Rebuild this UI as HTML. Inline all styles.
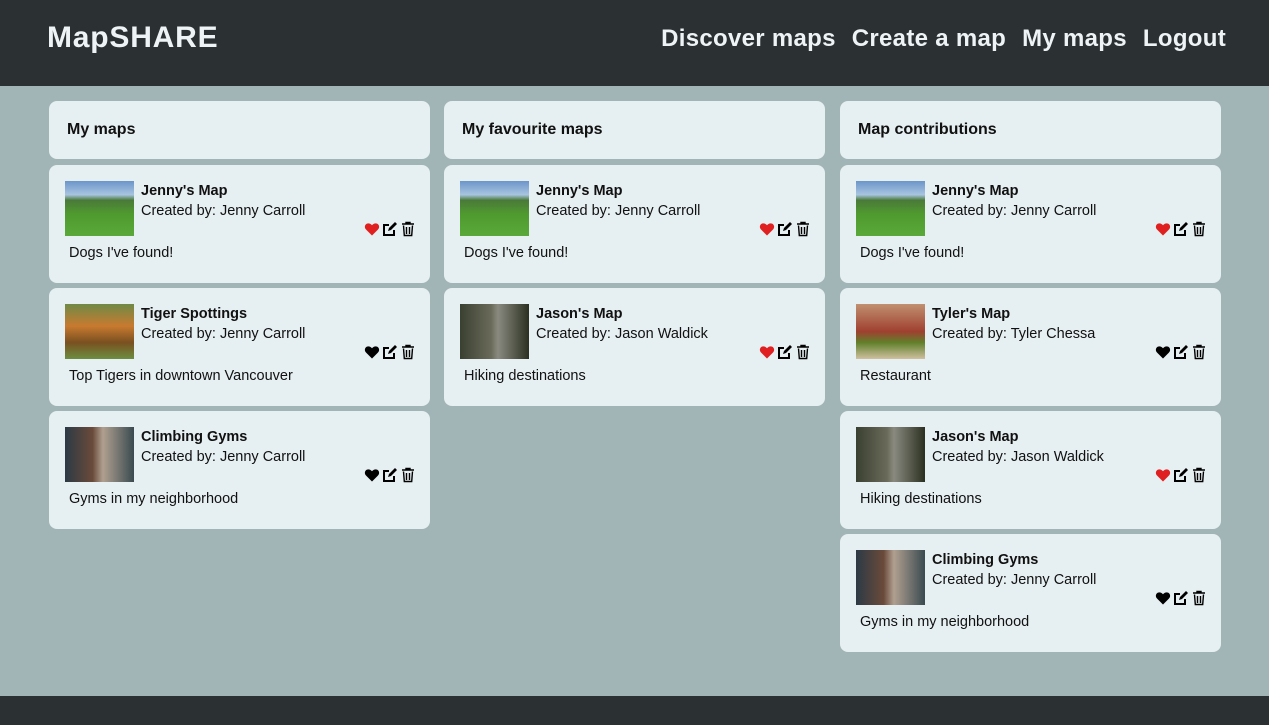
<!DOCTYPE html><html><head><style>
*{box-sizing:border-box;margin:0;padding:0}
body{width:1269px;height:725px;background:#a1b5b6;font-family:"Liberation Sans",sans-serif;position:relative;overflow:hidden;color:#111}
.hdr{position:absolute;left:0;top:0;width:1269px;height:86px;background:#2b3032}
.logo{position:absolute;left:47px;top:21px;font-size:30px;font-weight:bold;color:#eef3f5;letter-spacing:0.8px}
.nav{position:absolute;right:43px;top:25px;font-size:24px;font-weight:bold;color:#eef3f5;letter-spacing:0.3px}
.nav span{margin-left:16px}
.ftr{position:absolute;left:0;top:696px;width:1269px;height:29px;background:#2b3032}
.col{position:absolute;top:101px;width:381px}
.head{height:58px;background:#e6eff1;border-radius:8px;padding:20px 18px;font-size:16px;font-weight:bold;margin-bottom:6px}
.card{height:118px;background:#e6eff1;border-radius:8px;position:relative;margin-bottom:5px}
.img{position:absolute;left:16px;top:16px;width:69px;height:55px}
.t{position:absolute;left:92px;top:18px;font-size:14.5px;font-weight:bold}
.c{position:absolute;left:92px;top:38px;font-size:14.5px}
.d{position:absolute;left:20px;top:80px;font-size:14.5px}
.ic{position:absolute;left:315px;top:56px;display:flex;gap:2px}
.dog{background:linear-gradient(#6b95c9 0,#a8c4e0 25%,#4a7a3a 35%,#4f9a2e 60%,#5aa83a 100%)}
.tig{background:linear-gradient(#6f8a45,#c87a30 40%,#7a5020 70%,#6c8e40)}
.gym{background:linear-gradient(90deg,#2c3a45,#6a4a3a 40%,#b0a090 55%,#3a4a50)}
.hike{background:linear-gradient(90deg,#3a4030,#6a6a5a 45%,#8a8a80 55%,#2a3020)}
.food{background:linear-gradient(#c09070,#a04030 50%,#60802a 70%,#d0c0a0)}
</style></head><body>
<div class="hdr"><div class="logo">MapSHARE</div><div class="nav"><span>Discover maps</span><span>Create a map</span><span>My maps</span><span>Logout</span></div></div>
<svg width="0" height="0" style="position:absolute"><defs>
<symbol id="h" viewBox="0 0 16 16"><path d="M8 14.5 2 8.5C.2 6.7.6 3.6 2.9 2.6 4.6 1.9 6.7 2.5 8 4.3 9.3 2.5 11.4 1.9 13.1 2.6 15.4 3.6 15.8 6.7 14 8.5Z"/></symbol>
<symbol id="e" viewBox="0 0 16 16"><path d="M12 9v5H2V4h5" fill="none" stroke="#000" stroke-width="2"/><path d="M6 10l1-3 6-6 2 2-6 6z" fill="#000"/></symbol>
<symbol id="t" viewBox="0 0 16 16"><path d="M2 3h12M6 3V1.5h4V3M3.5 4.5l.8 10h7.4l.8-10M6.5 6v7M9.5 6v7" fill="none" stroke="#000" stroke-width="1.4"/></symbol>
</defs></svg>
<div class="col" style="left:49px">
<div class="head">My maps</div>
<div class="card"><div class="img dog"></div><div class="t">Jenny's Map</div><div class="c">Created by: Jenny Carroll</div><div class="ic"><svg width="16" height="16" fill="#e02020"><use href="#h"/></svg><svg width="16" height="16"><use href="#e"/></svg><svg width="16" height="16"><use href="#t"/></svg></div><div class="d">Dogs I've found!</div></div>
<div class="card"><div class="img tig"></div><div class="t">Tiger Spottings</div><div class="c">Created by: Jenny Carroll</div><div class="ic"><svg width="16" height="16" fill="#000"><use href="#h"/></svg><svg width="16" height="16"><use href="#e"/></svg><svg width="16" height="16"><use href="#t"/></svg></div><div class="d">Top Tigers in downtown Vancouver</div></div>
<div class="card"><div class="img gym"></div><div class="t">Climbing Gyms</div><div class="c">Created by: Jenny Carroll</div><div class="ic"><svg width="16" height="16" fill="#000"><use href="#h"/></svg><svg width="16" height="16"><use href="#e"/></svg><svg width="16" height="16"><use href="#t"/></svg></div><div class="d">Gyms in my neighborhood</div></div>
</div>
<div class="col" style="left:444px">
<div class="head">My favourite maps</div>
<div class="card"><div class="img dog"></div><div class="t">Jenny's Map</div><div class="c">Created by: Jenny Carroll</div><div class="ic"><svg width="16" height="16" fill="#e02020"><use href="#h"/></svg><svg width="16" height="16"><use href="#e"/></svg><svg width="16" height="16"><use href="#t"/></svg></div><div class="d">Dogs I've found!</div></div>
<div class="card"><div class="img hike"></div><div class="t">Jason's Map</div><div class="c">Created by: Jason Waldick</div><div class="ic"><svg width="16" height="16" fill="#e02020"><use href="#h"/></svg><svg width="16" height="16"><use href="#e"/></svg><svg width="16" height="16"><use href="#t"/></svg></div><div class="d">Hiking destinations</div></div>
</div>
<div class="col" style="left:840px">
<div class="head">Map contributions</div>
<div class="card"><div class="img dog"></div><div class="t">Jenny's Map</div><div class="c">Created by: Jenny Carroll</div><div class="ic"><svg width="16" height="16" fill="#e02020"><use href="#h"/></svg><svg width="16" height="16"><use href="#e"/></svg><svg width="16" height="16"><use href="#t"/></svg></div><div class="d">Dogs I've found!</div></div>
<div class="card"><div class="img food"></div><div class="t">Tyler's Map</div><div class="c">Created by: Tyler Chessa</div><div class="ic"><svg width="16" height="16" fill="#000"><use href="#h"/></svg><svg width="16" height="16"><use href="#e"/></svg><svg width="16" height="16"><use href="#t"/></svg></div><div class="d">Restaurant</div></div>
<div class="card"><div class="img hike"></div><div class="t">Jason's Map</div><div class="c">Created by: Jason Waldick</div><div class="ic"><svg width="16" height="16" fill="#e02020"><use href="#h"/></svg><svg width="16" height="16"><use href="#e"/></svg><svg width="16" height="16"><use href="#t"/></svg></div><div class="d">Hiking destinations</div></div>
<div class="card"><div class="img gym"></div><div class="t">Climbing Gyms</div><div class="c">Created by: Jenny Carroll</div><div class="ic"><svg width="16" height="16" fill="#000"><use href="#h"/></svg><svg width="16" height="16"><use href="#e"/></svg><svg width="16" height="16"><use href="#t"/></svg></div><div class="d">Gyms in my neighborhood</div></div>
</div>
<div class="ftr"></div>
</body></html>
